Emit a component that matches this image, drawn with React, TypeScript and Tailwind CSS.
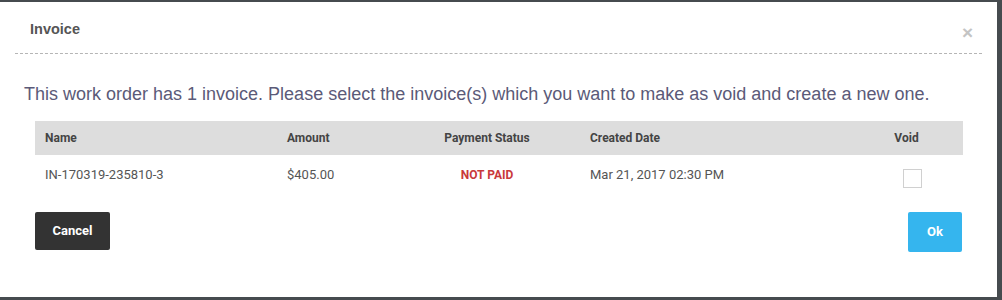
import { useState } from 'react'

export default function App() {
  const [checked, setChecked] = useState(false)

  return (
    <div className="h-[300px] w-[1002px] overflow-hidden bg-[#464b4f] pt-[2px] pr-[5px]">
      <div className="h-[295px] bg-white" style={{ fontFamily: '"Liberation Sans", Arial, sans-serif' }}>
        {/* Header */}
        <div className="mx-[15px] flex h-[52px] items-center justify-between border-b border-dashed border-[#b5b5b5] pl-[15px] pr-[9px] pt-[4px]">
          <h4 className="text-[14.5px] font-bold text-[#555]">Invoice</h4>
          <button className="mt-[5px] text-[19px] font-bold leading-none text-[#c4c4c4]">×</button>
        </div>

        {/* Body */}
        <div className="px-[24px] pt-[28px]">
          <p className="text-[18px] leading-[24px] text-[#5b5a78]">
            This work order has 1 invoice. Please select the invoice(s) which you want to make as void and create a new one.
          </p>
        </div>

        <div className="px-[35px] pt-[15px]" style={{ fontFamily: 'Roboto, "Liberation Sans", sans-serif' }}>
          <table className="w-[928px] table-fixed border-collapse text-[12px]">
            <colgroup>
              <col className="w-[242px]" />
              <col className="w-[117px]" />
              <col className="w-[186px]" />
              <col className="w-[270px]" />
              <col className="w-[113px]" />
            </colgroup>
            <thead>
              <tr className="h-[34px] bg-[#dddddd] text-left text-[#444]">
                <th className="px-[10px] font-bold">Name</th>
                <th className="px-[10px] font-bold">Amount</th>
                <th className="px-[10px] text-center font-bold">Payment Status</th>
                <th className="px-[10px] font-bold">Created Date</th>
                <th className="px-[10px] text-center font-bold">Void</th>
              </tr>
            </thead>
            <tbody>
              <tr className="h-[42px] text-[13px] text-[#555]">
                <td className="px-[10px] pb-[2px]">IN-170319-235810-3</td>
                <td className="px-[10px] pb-[2px]">$405.00</td>
                <td className="px-[10px] pb-[2px] text-center text-[12px] font-bold text-[#c9393b]">NOT PAID</td>
                <td className="px-[10px] pb-[2px]">Mar 21, 2017 02:30 PM</td>
                <td className="px-[10px] pt-[4px] text-center">
                  <input
                    type="checkbox"
                    checked={checked}
                    onChange={(e) => setChecked(e.target.checked)}
                    className="ml-[12px] h-[19px] w-[19px] appearance-none border border-[#d0d0d0] bg-white align-middle checked:bg-[#35b5ee]"
                  />
                </td>
              </tr>
            </tbody>
          </table>

          {/* Footer */}
          <div className="mt-[15px] flex items-start justify-between">
            <button className="h-[38px] w-[75px] rounded-[2px] bg-[#333333] text-[13px] font-bold text-white">
              Cancel
            </button>
            <button className="h-[40px] w-[54px] rounded-[2px] bg-[#35b5ee] text-[13px] font-bold text-white">
              Ok
            </button>
          </div>
        </div>
      </div>
    </div>
  )
}
